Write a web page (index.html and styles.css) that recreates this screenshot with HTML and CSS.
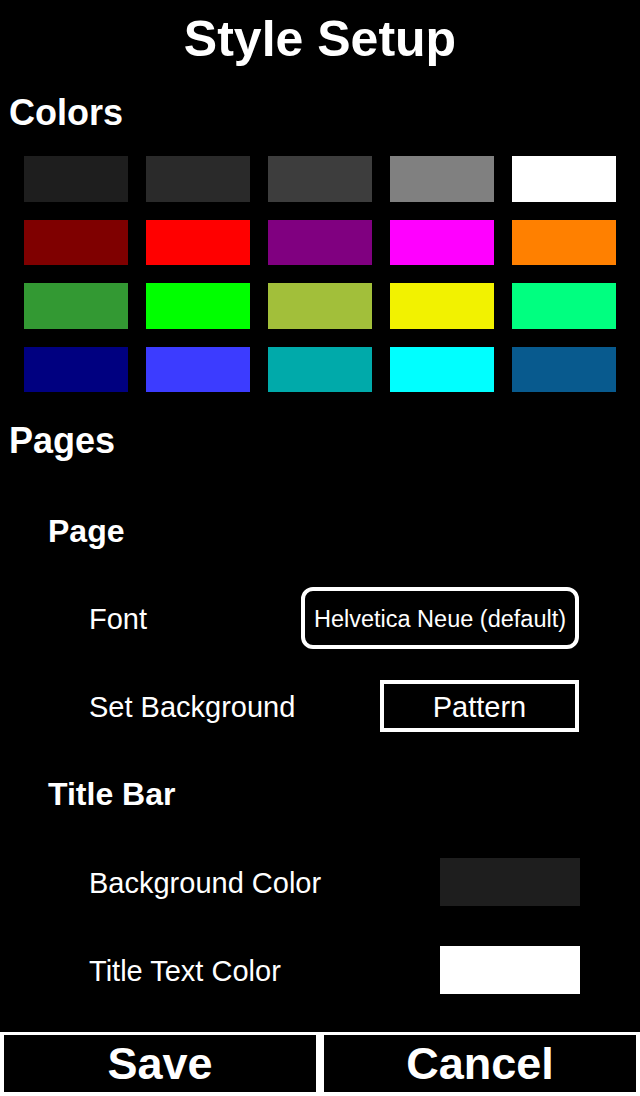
FILE: index.html
```html
<!DOCTYPE html>
<html lang="en">
<head>
  <meta charset="UTF-8">
  <meta name="viewport" content="width=device-width, initial-scale=1.0">
  <title>Style Setup</title>
  <link rel="stylesheet" href="styles.css">
</head>
<body>
  <div class="screen">
    <h1 class="title">Style Setup</h1>

    <h2 class="section">Colors</h2>
    <div class="palette">
      <div class="swatch" style="background:#1e1e1e"></div>
      <div class="swatch" style="background:#2a2a2a"></div>
      <div class="swatch" style="background:#3d3d3d"></div>
      <div class="swatch" style="background:#808080"></div>
      <div class="swatch" style="background:#ffffff"></div>

      <div class="swatch" style="background:#7f0000"></div>
      <div class="swatch" style="background:#ff0000"></div>
      <div class="swatch" style="background:#800080"></div>
      <div class="swatch" style="background:#ff00ff"></div>
      <div class="swatch" style="background:#ff8000"></div>

      <div class="swatch" style="background:#339933"></div>
      <div class="swatch" style="background:#00ff00"></div>
      <div class="swatch" style="background:#a2bf3a"></div>
      <div class="swatch" style="background:#f2f200"></div>
      <div class="swatch" style="background:#00ff80"></div>

      <div class="swatch" style="background:#000080"></div>
      <div class="swatch" style="background:#3c3cff"></div>
      <div class="swatch" style="background:#00aaaa"></div>
      <div class="swatch" style="background:#00ffff"></div>
      <div class="swatch" style="background:#085a8e"></div>
    </div>

    <h2 class="section pages">Pages</h2>

    <h3 class="group first">Page</h3>
    <div class="row font-row">
      <span class="label">Font</span>
      <button class="pick rounded">Helvetica Neue (default)</button>
    </div>
    <div class="row bg-row">
      <span class="label">Set Background</span>
      <button class="pick square">Pattern</button>
    </div>

    <h3 class="group">Title Bar</h3>
    <div class="row color-row">
      <span class="label">Background Color</span>
      <div class="color-box" style="background:#1e1e1e"></div>
    </div>
    <div class="row color-row next">
      <span class="label">Title Text Color</span>
      <div class="color-box" style="background:#ffffff"></div>
    </div>

    <div class="footer">
      <button class="footer-btn">Save</button>
      <button class="footer-btn">Cancel</button>
    </div>
  </div>
</body>
</html>
```

FILE: styles.css
```css
body {
  margin: 0;
  background: #000;
  color: #fff;
  font-family: "Liberation Sans", Arial, sans-serif;
}
.screen {
  height: 1096px;
  display: flex;
  flex-direction: column;
}
.title {
  margin: 0;
  height: 78px;
  line-height: 78px;
  font-size: 50px;
  font-weight: bold;
  text-align: center;
}
.section {
  margin: 14px 0 0;
  padding-left: 9px;
  line-height: 42px;
  font-size: 36px;
  font-weight: bold;
}
.section.pages {
  margin-top: 28px;
}
.palette {
  margin: 22px 24px 0;
  display: grid;
  grid-template-columns: repeat(5, 104px);
  grid-template-rows: 46px 45px 46px 45px;
  column-gap: 18px;
  row-gap: 18px;
}
.group {
  margin: 42px 0 0;
  padding-left: 48px;
  line-height: 40px;
  font-size: 32px;
  font-weight: bold;
}
.group.first {
  margin-top: 49px;
}
.row {
  display: flex;
  align-items: center;
  justify-content: space-between;
  padding: 0 60px 0 89px;
}
.font-row {
  margin-top: 36px;
  height: 62px;
}
.bg-row {
  margin-top: 31px;
  height: 52px;
  padding-right: 61px;
}
.color-row {
  margin-top: 44px;
  height: 48px;
}
.color-row.next {
  margin-top: 40px;
}
.label {
  font-size: 29px;
  padding-top: 2px;
}
.pick {
  background: #000;
  color: #fff;
  border: 4px solid #fff;
  font-family: "Liberation Sans", Arial, sans-serif;
  padding: 2px 0 0;
  box-sizing: border-box;
}
.rounded {
  width: 278px;
  height: 62px;
  border-radius: 12px;
  font-size: 23.5px;
  margin-right: 1px;
}
.square {
  width: 199px;
  height: 52px;
  font-size: 29px;
}
.color-box {
  width: 140px;
  height: 48px;
}
.footer {
  margin-top: auto;
  height: 64px;
  box-sizing: border-box;
  background: #fff;
  padding: 3px 4px 4px;
  display: flex;
  gap: 8px;
}
.footer-btn {
  flex: 1;
  background: #000;
  color: #fff;
  border: none;
  padding: 0;
  font-family: "Liberation Sans", Arial, sans-serif;
  font-size: 45px;
  font-weight: bold;
}
```
